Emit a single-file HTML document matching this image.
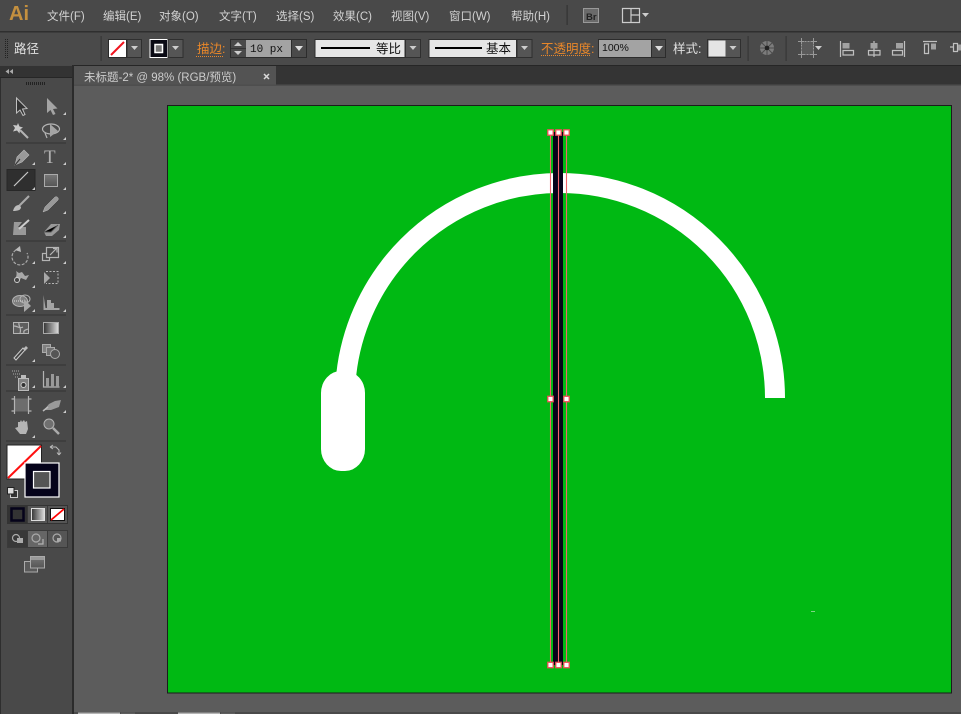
<!DOCTYPE html>
<html><head><meta charset="utf-8"><style>
html,body{margin:0;padding:0;background:#5c5c5c;width:961px;height:714px;overflow:hidden}
svg{display:block;position:absolute;left:0;top:0}
text{font-family:"Liberation Sans","Noto Sans CJK SC",sans-serif}
.m{font-size:11.5px;fill:#d2d2d2}
.o{font-size:12.5px;fill:#e8872a}
.w{font-size:12.5px;fill:#e0e0e0}
.k{font-size:12.5px;fill:#111}
.i{fill:none;stroke:#b4b4b4;stroke-width:1.2}
.l{fill:#999}
</style></head><body>
<svg width="961" height="714" viewBox="0 0 961 714" xmlns="http://www.w3.org/2000/svg">
<defs>
<linearGradient id="g1" x1="0" x2="1"><stop offset="0" stop-color="#333"/><stop offset="1" stop-color="#ddd"/></linearGradient>
<linearGradient id="g2" x1="0" x2="0" y1="0" y2="1"><stop offset="0" stop-color="#777"/><stop offset="1" stop-color="#555"/></linearGradient>
</defs>
<!-- base -->
<rect width="961" height="714" fill="#5c5c5c"/>
<rect width="961" height="31" fill="#494949"/>
<rect y="31" width="961" height="1.5" fill="#2f2f2f"/>
<rect y="32.5" width="961" height="32.5" fill="#4a4a4a"/>
<rect y="65" width="961" height="21" fill="#343434"/>
<rect y="65" width="961" height="1" fill="#262626"/>
<!-- menu -->
<text x="9" y="20" style="font-size:20px;font-weight:bold" fill="#c4903f">Ai</text>
<text class="m" x="47" y="20">文件(F)</text>
<text class="m" x="103" y="20">编辑(E)</text>
<text class="m" x="159" y="20">对象(O)</text>
<text class="m" x="219" y="20">文字(T)</text>
<text class="m" x="276" y="20">选择(S)</text>
<text class="m" x="333" y="20">效果(C)</text>
<text class="m" x="391" y="20">视图(V)</text>
<text class="m" x="449" y="20">窗口(W)</text>
<text class="m" x="511" y="20">帮助(H)</text>
<rect x="566.5" y="5" width="1.2" height="20" fill="#333"/>
<rect x="583.5" y="8.5" width="15" height="14" fill="#6a6a6a" stroke="#999"/>
<text x="586" y="20" style="font-size:9.5px;font-weight:bold" fill="#222">Br</text>
<path d="M622.5 8.5h17v14h-17zM631 8.5v14M631 15h8.500" fill="#444" stroke="#ccc" stroke-width="1.200"/>
<path d="M642 13h7l-3.500 4z" fill="#ccc"/>
<!-- control bar -->
<path d="M5.500 39v20M7.500 39v20" stroke="#222" stroke-width="1" stroke-dasharray="1 1"/>
<text class="w" x="14" y="53">路径</text>
<rect x="100.500" y="36" width="1.200" height="25" fill="#363636"/>
<rect x="108.500" y="39.500" width="18" height="18" fill="#fff" stroke="#2a2a2a"/>
<path d="M111 55l13-13" stroke="#f0141e" stroke-width="2"/>
<rect x="127" y="39.500" width="14.500" height="18" fill="#555" stroke="#2f2f2f"/>
<path d="M131 46h7l-3.500 4z" fill="#ccc"/>
<rect x="150" y="39.500" width="17.500" height="18" fill="#0a0a14" stroke="#fff"/>
<rect x="155" y="44.500" width="7.500" height="8" fill="#777" stroke="#fff" stroke-width="1.500"/>
<rect x="168" y="39.500" width="15" height="18" fill="#555" stroke="#2f2f2f"/>
<path d="M172 46h7l-3.500 4z" fill="#ccc"/>
<text class="o" x="197" y="53">描边:</text>
<path d="M196 56.500h28" stroke="#e8872a" stroke-dasharray="1 1"/>
<rect x="230.500" y="39.500" width="76" height="18" fill="#4a4a4a" stroke="#2c2c2c"/>
<rect x="246" y="40" width="45" height="17" fill="#a3a3a3"/>
<path d="M238 42l4 4h-8zM238 55l4-4h-8z" fill="#ccc"/><path d="M231 48.500h15" stroke="#333"/>
<text x="250" y="52" style="font-size:11px;font-family:'Liberation Mono',monospace" fill="#111">10 px</text>
<path d="M295 46h8l-4 5z" fill="#ddd"/><path d="M291.500 40v17" stroke="#2c2c2c"/>
<rect x="315" y="39.500" width="90" height="18" fill="#e6e6e6" stroke="#2f2f2f"/>
<rect x="321" y="47" width="49" height="2" fill="#000"/>
<text class="k" x="376" y="53">等比</text>
<rect x="405.500" y="39.500" width="15" height="18" fill="#555" stroke="#2f2f2f"/>
<path d="M409.500 46h7l-3.500 4z" fill="#ccc"/>
<rect x="429" y="39.500" width="87.500" height="18" fill="#e6e6e6" stroke="#2f2f2f"/>
<rect x="435" y="47" width="47" height="2" fill="#000"/>
<text class="k" x="486" y="53">基本</text>
<rect x="517" y="39.500" width="15" height="18" fill="#555" stroke="#2f2f2f"/>
<path d="M521 46h7l-3.500 4z" fill="#ccc"/>
<text class="o" x="541" y="53">不透明度:</text>
<path d="M541 55.500h50" stroke="#e8872a" stroke-dasharray="1 1"/>
<rect x="598.500" y="39.500" width="67" height="18" fill="#4a4a4a" stroke="#2c2c2c"/>
<rect x="599" y="40" width="52" height="17" fill="#a3a3a3"/>
<text x="602" y="51" style="font-size:10.500px" fill="#111">100%</text>
<path d="M655 46h8l-4 5z" fill="#ddd"/><path d="M651.500 40v17" stroke="#2c2c2c"/>
<text class="w" x="673" y="53">样式:</text>
<rect x="707.500" y="39.500" width="33" height="18" fill="#555" stroke="#2f2f2f"/>
<rect x="708.500" y="40.500" width="17" height="16" fill="#e4e4e4"/>
<path d="M729.500 46h7l-3.500 4z" fill="#ccc"/>
<rect x="747.500" y="36" width="1.200" height="25" fill="#363636"/>
<circle cx="767" cy="48" r="7" fill="#7c7c7c"/><circle cx="767" cy="48" r="2.500" fill="#222"/>
<path d="M767 41v4M767 51v4M760 48h4M770 48h4M762 43l3 3M769 50l3 3M772 43l-3 3M765 50l-3 3" stroke="#4d4d4d" stroke-width="1"/>
<rect x="785.500" y="36" width="1.200" height="25" fill="#363636"/>
<path d="M801.500 41.500h12v13h-12z" fill="#5a5a5a" stroke="#999" stroke-dasharray="2 1"/>
<path d="M798 41.500h6M811 41.500h6M798 54.500h6M811 54.500h6M801.500 38v6M813.500 38v6M801.500 52v6M813.500 52v6" stroke="#999"/>
<path d="M815 46h7l-3.500 4z" fill="#ccc"/>
<g fill="none" stroke="#c0c0c0" stroke-width="1.200">
<path d="M840.500 41v16M843 50.500h10.500v4.500H843z"/>
<path d="M874 41v16M868.500 50.500h11.500v4.500h-11.500z"/>
<path d="M904.500 41v16M892.500 50.500h10v4.500h-10z"/>
<path d="M923 41.500h14M924.500 44v9.500h4V44z"/>
<path d="M950 47h3M953.500 43.500v8h4v-8z"/>
</g>
<g fill="#a2a2a2"><rect x="842.500" y="43" width="7" height="5.500"/><rect x="870.500" y="43" width="7" height="5.500"/><rect x="896" y="43" width="7" height="5.500"/><rect x="931" y="43.500" width="5" height="6"/><rect x="958" y="44.500" width="3" height="6"/></g>
<!-- left panel -->
<rect y="65" width="72" height="649" fill="#494949"/>
<rect y="66" width="72" height="11" fill="#333"/>
<rect y="77" width="72" height="1" fill="#262626"/>
<rect x="72" y="65" width="2" height="649" fill="#2b2b2b"/>
<rect x="0" y="78" width="1" height="636" fill="#2e2e2e"/>
<path d="M9 69v5l-3.500-2.500zM13 69v5l-3.500-2.500z" fill="#aaa"/>
<path d="M26 83.500h19" stroke="#222" stroke-width="3" stroke-dasharray="1 1"/>
<!-- tab -->
<rect x="74" y="66" width="202" height="20" fill="#535353"/>
<rect x="74" y="84.500" width="887" height="1.500" fill="#4e4e4e"/>
<text x="84" y="81" style="font-size:11.500px" fill="#cccccc">未标题-2* @ 98% (RGB/预览)</text>
<path d="M264 74l5 5M269 74l-5 5" stroke="#d8d8d8" stroke-width="1.500"/>
<!-- toolbar separators -->
<g fill="#333"><rect x="6" y="142.500" width="60" height="1"/><rect x="6" y="240.500" width="60" height="1"/><rect x="6" y="314.500" width="60" height="1"/><rect x="6" y="364.500" width="60" height="1"/><rect x="6" y="390.500" width="60" height="1"/><rect x="6" y="440.500" width="60" height="1"/></g>
<!-- tool icons -->
<rect x="7" y="169.500" width="28" height="21" fill="#2f2f2f" stroke="#272727"/>
<path d="M16.500 98v15l3.500-3 3 5.500 2-1-2.500-5.500 4.500-.5z" fill="#333" stroke="#c0c0c0"/>
<path d="M47 98v15l3.500-3 2.500 5 2.500-1-2.500-5 4.500-.5z" fill="#a4a4a4"/>
<path d="M20 130l8 8" stroke="#b4b4b4" stroke-width="2"/><path d="M18 123l1.500 3.500 3.500 1-3 2-.5 4-2.500-3-4 1 2-3.500-2-3 4 .5z" fill="#c8c8c8"/>
<ellipse cx="51" cy="129" rx="8.500" ry="5" class="i"/><path d="M50 124v13l8-6z" fill="#a4a4a4"/><path d="M45 133l2 5" class="i"/>
<path d="M15 165l2-8 7-7 5 5-7 7z" fill="#999" stroke="#bbb" stroke-width=".6"/><path d="M15 165l5-6" stroke="#333"/>
<text x="44" y="163" style="font-size:19px;font-family:'Liberation Serif',serif" fill="#b0b0b0">T</text>
<path d="M14 186l14-14" stroke="#c8c8c8" stroke-width="1.200"/>
<rect x="44.500" y="174.500" width="13" height="12" fill="url(#g2)" stroke="#aaa"/>
<path d="M29 196l-10 10" stroke="#aaa" stroke-width="2"/><path d="M13 211c1-4 3-6 6-6l2 2c0 3-3 4-8 4z" fill="#bbb"/>
<path d="M43 212l2-5 10-10c2-1 4 1 3 3l-10 10z" fill="#999" stroke="#bbb" stroke-width=".5"/>
<path d="M14 222h8l-4 5h8v8H13z" fill="#999"/><path d="M19 229l10-9" stroke="#ccc" stroke-width="2"/>
<path d="M44 232l7-8h9l-1 6-7 6h-6z" fill="#999"/><path d="M44 232h7l7-7" stroke="#555"/>
<path d="M16 250a8 8 0 1 0 11 3" fill="none" stroke="#aaa" stroke-width="1.200" stroke-dasharray="3 1.500"/><path d="M20 246l-5 4 6 2z" fill="#bbb"/>
<rect x="42.500" y="253.500" width="7" height="7" class="i"/><rect x="46.500" y="247.500" width="12" height="10" class="i" style="fill:#494949"/><path d="M50 255l6-6M53 248.500h4v4" class="i"/>
<path d="M14 280c3-3 3-7 2-9l3 2 3-1 3 4 4-1-3 5-5-2-3 5z" fill="#a8a8a8"/><circle cx="17" cy="280" r="2.500" fill="#444" stroke="#ccc"/>
<path d="M44 272v12l6-6z" fill="#a8a8a8"/><path d="M46 271.500h12v12H46" fill="none" stroke="#b4b4b4" stroke-dasharray="2 1.500"/>
<ellipse cx="20" cy="301" rx="7.500" ry="5.500" fill="#808080" stroke="#b4b4b4"/><ellipse cx="25" cy="299" rx="5" ry="4" fill="none" stroke="#b4b4b4"/><path d="M24 299v13l7-6z" fill="#a8a8a8"/><path d="M14 301h9" stroke="#ddd" stroke-dasharray="1 1"/>
<path d="M43.500 295v15h16v-2h-14zM47 300h4v8h-4zM51 303h3v5h-3z" fill="#a4a4a4"/>
<rect x="13.500" y="322.500" width="15" height="11" fill="#5e5e5e" stroke="#b4b4b4"/>
<path d="M14 326c4 0 5 3 9 1M19 323c-1 3 3 5 1 10M24 333c-1-3 2-3 4-4" class="i" stroke-width="1"/>
<rect x="43.500" y="322.500" width="15" height="11" fill="url(#g1)" stroke="#aaa"/>
<path d="M14 358l9-10 2 2-9 10z" fill="#444" stroke="#ccc"/><path d="M23 349l3-3 2 2-3 3z" fill="#bbb"/>
<rect x="42.500" y="344.500" width="8" height="8" fill="#808080" stroke="#aaa"/><rect x="46.500" y="347.500" width="8" height="8" fill="#707070" stroke="#aaa"/><circle cx="55" cy="354" r="4.500" fill="#555" stroke="#aaa"/>
<rect x="18.500" y="378.500" width="10" height="12" fill="#808080" stroke="#bbb"/><circle cx="23.500" cy="385" r="2.500" fill="#333" stroke="#ccc"/><rect x="21" y="375" width="5" height="3" fill="#bbb"/><path d="M12 371h8M13 374h7M15 377h4" stroke="#aaa" stroke-dasharray="1 1"/>
<path d="M43.500 371v16h16" class="i"/><path d="M46 378h3v9h-3zM51 374h3v13h-3zM56 376h3v11h-3z" class="l"/>
<rect x="14.500" y="398.500" width="14" height="13" fill="#6d6d6d"/><path d="M14.500 396v3h-3M28.500 396v3h3M14.500 414v-3h-3M28.500 414v-3h3M14.500 399v12M28.500 399v12" class="i" stroke-width="1"/>
<path d="M44 410l5-6 6-3 6-1-2 7-8 3z" fill="#999"/><path d="M43 411l5-4" stroke="#bbb" stroke-width="1.500"/>
<path d="M15 428l3-1v-5l2 0 1-2 1 2 2-2 1 2 2-1 1 8-2 5h-6z" fill="#b4b4b4"/>
<circle cx="49" cy="424" r="5" fill="#707070" stroke="#b4b4b4"/><path d="M53 428l6 6" stroke="#aaa" stroke-width="2.500"/>
<!-- corner marks -->
<g fill="#ccc"><path d="M66 115v-3l-3 3zM66 140v-3l-3 3zM35 165v-3l-3 3zM66 165v-3l-3 3zM35 190v-3l-3 3zM66 190v-3l-3 3zM66 214v-3l-3 3zM66 238v-3l-3 3zM35 264v-3l-3 3zM66 264v-3l-3 3zM35 288v-3l-3 3zM66 312v-3l-3 3zM35 312v-3l-3 3zM35 362v-3l-3 3zM35 388v-3l-3 3zM66 388v-3l-3 3zM66 413v-3l-3 3zM35 438v-3l-3 3z"/></g>
<!-- colour -->
<rect x="7" y="445" width="34.500" height="34" fill="#fff" stroke="#222"/>
<path d="M8 478l33-32" stroke="#ff1010" stroke-width="2"/>
<rect x="25" y="463" width="34" height="34" fill="#05031a" stroke="#fff" stroke-width="1.200"/>
<rect x="33.500" y="471.500" width="16.500" height="16.500" fill="#555" stroke="#fff" stroke-width="1.200"/>
<path d="M51 447h5l3 3v5M50 447l3-2M50 447l3 2M59 455l-2-2.500M59 455l2-2.500" fill="none" stroke="#bbb"/>
<rect x="10.500" y="490.500" width="7" height="7" fill="#333" stroke="#ccc"/><rect x="7.500" y="487.500" width="6.500" height="6.500" fill="#ddd" stroke="#222"/>
<rect x="7.500" y="505.500" width="60" height="18" fill="#555" stroke="#333"/>
<rect x="8" y="506" width="19" height="17" fill="#333"/>
<rect x="11.500" y="508.500" width="12" height="12" fill="#333" stroke="#05031a" stroke-width="2.500"/>
<rect x="31.500" y="508.500" width="13" height="12" fill="url(#g1)" stroke="#ddd"/>
<rect x="50.500" y="508.500" width="14" height="12" fill="#fff" stroke="#111"/><path d="M51 520l13-11" stroke="#f00" stroke-width="1.800"/>
<path d="M27.500 506v17M47.500 506v17" stroke="#3a3a3a"/>
<rect x="7.500" y="530.500" width="60" height="17" fill="#555" stroke="#3a3a3a"/>
<rect x="8" y="531" width="19.500" height="16" fill="#383838"/><rect x="28" y="531" width="19.500" height="16" fill="#666"/>
<path d="M27.500 531v16M47.500 531v16" stroke="#3a3a3a"/>
<circle cx="16" cy="538" r="3.500" fill="none" stroke="#aaa" stroke-width="1.200"/><rect x="17" y="538" width="6" height="5" fill="#aaa"/>
<circle cx="36" cy="538" r="4" fill="none" stroke="#aaa" stroke-width="1.200"/><path d="M38 544h5v-5" class="i" stroke-width="1"/>
<circle cx="57" cy="538" r="4" fill="none" stroke="#aaa" stroke-width="1.200"/><rect x="57" y="538" width="4" height="3.500" fill="#aaa"/>
<rect x="24.500" y="561.500" width="13" height="10.500" fill="#5a5a5a" stroke="#aaa"/>
<rect x="30.500" y="556.500" width="14" height="11.500" fill="url(#g2)" stroke="#aaa"/>
<rect x="31" y="557" width="13" height="3" fill="#999"/>
<!-- canvas -->
<rect x="74" y="86" width="887" height="628" fill="#5c5c5c"/>
<rect x="167" y="105" width="785" height="588.500" fill="#1c1c1c"/>
<rect x="168" y="106" width="783" height="586.500" fill="#00b913"/>
<path d="M345 398A215 215 0 0 1 775 398" fill="none" stroke="#fff" stroke-width="20"/>
<rect x="321" y="371" width="44" height="100" rx="20" ry="22" fill="#fff"/>
<path d="M811 611.500h4" stroke="#7fd685"/>
<!-- selected line -->
<rect x="553" y="132" width="10" height="533" fill="#05031a"/>
<path d="M550.500 132v533M558.500 132v533M566.500 132v533" stroke="#f2646b" stroke-width="1.100"/>
<g fill="#fff" stroke="#f2505a" stroke-width="1.300">
<rect x="547.800" y="129.800" width="5.400" height="5.400"/><rect x="555.800" y="129.800" width="5.400" height="5.400"/><rect x="563.800" y="129.800" width="5.400" height="5.400"/>
<rect x="547.800" y="396.300" width="5.400" height="5.400"/><rect x="563.800" y="396.300" width="5.400" height="5.400"/>
<rect x="547.800" y="662.300" width="5.400" height="5.400"/><rect x="555.800" y="662.300" width="5.400" height="5.400"/><rect x="563.800" y="662.300" width="5.400" height="5.400"/>
</g>
<!-- bottom strip -->
<rect x="74" y="712" width="887" height="2" fill="#4a4a4a"/>
<rect x="78" y="712.500" width="42" height="1.500" fill="#b5b5b5"/>
<rect x="121" y="712.500" width="14" height="1.500" fill="#5f5f5f"/>
<rect x="178" y="712.500" width="42" height="1.500" fill="#b5b5b5"/>
<rect x="221" y="712.500" width="14" height="1.500" fill="#5f5f5f"/>
</svg>
</body></html>
